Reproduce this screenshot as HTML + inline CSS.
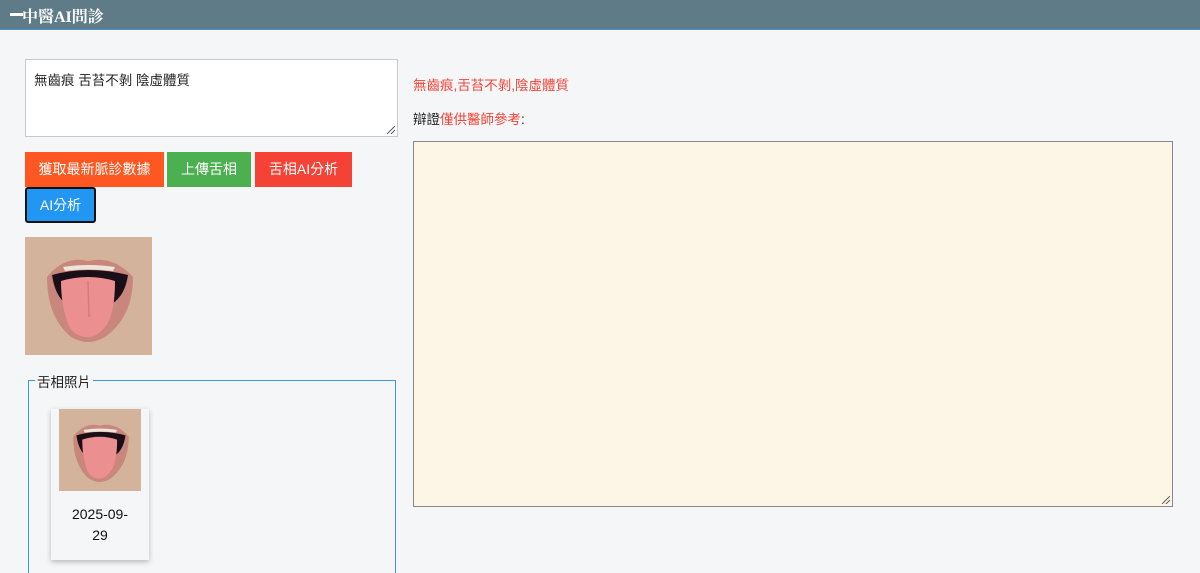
<!DOCTYPE html>
<html><head><meta charset="utf-8"><style>
*{box-sizing:border-box;margin:0;padding:0}
html,body{width:1200px;height:573px;overflow:hidden}
body{background:#f5f6f8;font-family:"Liberation Sans","Noto Sans CJK TC",sans-serif;font-size:14px;color:#222;position:relative}
.hdr{position:absolute;left:0;top:0;width:1200px;height:30px;background:#5f7b88;border-bottom:1px solid #4a90d0}
.hdr span{position:absolute;left:10px;top:4px;color:#fff;font:bold 16px "Liberation Serif","Noto Serif CJK SC",serif;}
.hdr i{position:absolute;left:10px;top:13px;width:13px;height:3px;background:#fff}
.ta{position:absolute;left:25px;top:59px;width:373px;height:78px;background:#fff;border:1px solid #c9c9c9;padding:9px 8px;font-size:13.5px}
.btn{position:absolute;height:35px;color:#fff;font-size:14px;line-height:35px;text-align:center}
.ta2{position:absolute;left:413px;top:141px;width:760px;height:366px;background:#fdf5e6;border:1px solid #888}
.grip{position:absolute;right:2px;bottom:2px;width:8px;height:8px;background:linear-gradient(135deg,transparent 45%,#666 45%,#666 55%,transparent 55%,transparent 70%,#666 70%,#666 80%,transparent 80%)}
.fs{position:absolute;left:28px;top:380px;width:368px;height:193px;border:1px solid #3e95e6;border-bottom:none}
.lg{position:absolute;left:35px;top:371px;font-size:13.5px;padding:0 2px;background:#f5f6f8;color:#222}
.card{position:absolute;left:51px;top:409px;width:98px;height:151px;background:#f5f6f8;box-shadow:0 2px 5px rgba(0,0,0,.25)}
</style></head><body>
<div class="hdr"><i></i><span>&nbsp;&nbsp;&nbsp;中醫AI問診</span></div>
<div class="ta">無齒痕 舌苔不剝 陰虛體質<div class="grip"></div></div>
<div class="btn" style="left:25px;top:152px;width:139px;background:#fe5722">獲取最新脈診數據</div>
<div class="btn" style="left:167px;top:152px;width:84px;background:#4caf50">上傳舌相</div>
<div class="btn" style="left:255px;top:152px;width:97px;background:#f44336">舌相AI分析</div>
<div class="btn" style="left:25px;top:187px;width:71px;height:36px;line-height:32px;background:#2196f3;border:2px solid #111;border-radius:3px">AI分析</div>
<svg style="position:absolute;left:25px;top:237px" width="127" height="118" viewBox="0 0 127 118">
<rect width="127" height="118" fill="#d3b39b"/>
<path d="M22 40 Q40 18 63 24 Q88 18 108 40 Q108 80 80 100 Q63 110 46 100 Q22 80 22 40Z" fill="#c9867c"/>
<path d="M27 38 Q63 28 103 38 Q100 58 88 66 L40 66 Q30 58 27 38Z" fill="#1a0f16"/>
<path d="M38 30 Q63 26 90 30 L88 34 Q63 31 40 34Z" fill="#eee4da"/>
<path d="M36 44 Q63 36 90 44 Q90 78 80 90 Q70 102 60 100 Q46 98 42 84 Q36 66 36 44Z" fill="#ec8f91"/>
<path d="M63 44 L64 80" stroke="#d77a7c" stroke-width="1.5"/>
</svg>
<div class="fs"></div><div class="lg">舌相照片</div>
<div class="card">
<svg style="position:absolute;left:8px;top:0" width="82" height="82" viewBox="0 0 127 118" preserveAspectRatio="none">
<rect width="127" height="118" fill="#d3b39b"/>
<path d="M22 40 Q40 18 63 24 Q88 18 108 40 Q108 80 80 100 Q63 110 46 100 Q22 80 22 40Z" fill="#c9867c"/>
<path d="M27 38 Q63 28 103 38 Q100 58 88 66 L40 66 Q30 58 27 38Z" fill="#1a0f16"/>
<path d="M38 30 Q63 26 90 30 L88 34 Q63 31 40 34Z" fill="#eee4da"/>
<path d="M36 44 Q63 36 90 44 Q90 78 80 90 Q70 102 60 100 Q46 98 42 84 Q36 66 36 44Z" fill="#ec8f91"/>
</svg>
<div style="position:absolute;left:0;top:95px;width:98px;text-align:center;font-size:14px;line-height:21px;color:#111">2025-09-<br>29</div>
</div>
<div style="position:absolute;left:413px;top:74px;color:#f44336;font-size:13.5px">無齒痕,舌苔不剝,陰虛體質</div>
<div style="position:absolute;left:413px;top:108px;font-size:13.5px">辯證<span style="color:#f44336">僅供醫師參考</span>:</div>
<div class="ta2"><div class="grip"></div></div>
</body></html>
